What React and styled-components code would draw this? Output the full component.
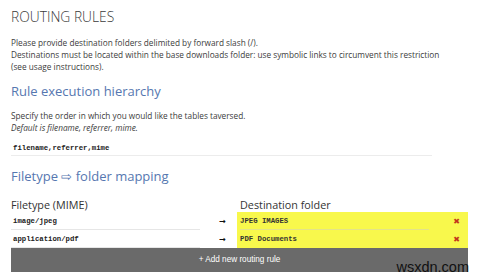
import React from 'react';
import styled, { createGlobalStyle } from 'styled-components';

const Global = createGlobalStyle`
  body {
    margin: 0;
    background: #fff;
    font-family: "Open Sans", "Liberation Sans", sans-serif;
    color: #333;
  }
`;

const Page = styled.div`
  position: relative;
  width: 480px;
  height: 276px;
  overflow: hidden;
  padding: 7px 12px 0 11px;
  box-sizing: border-box;
`;

const Title = styled.h1`
  margin: 0;
  font-size: 13.8px;
  font-weight: 300;
  line-height: 20px;
  color: #3a3a3a;
`;

const Text = styled.p`
  margin: ${p => p.$top || 0}px 0 0;
  font-size: 8.25px;
  line-height: 12px;
  color: #3c3c3c;
  white-space: nowrap;
`;

const Heading = styled.h2`
  margin: ${p => p.$top}px 0 0;
  font-size: 13px;
  font-weight: 400;
  line-height: 18px;
  color: #5677b0;
`;

const Order = styled.div`
  margin-top: 7px;
  width: 419px;
  height: 14px;
  border-bottom: 1px solid #ececec;
  padding-left: 2px;
  font-family: "Liberation Mono", monospace;
  font-size: 7.3px;
  font-weight: 700;
  line-height: 14px;
  color: #222;
`;

const Grid = styled.div`
  margin-top: 12px;
  display: grid;
  grid-template-columns: 189px 37px 1fr;
`;

const ColHead = styled.div`
  grid-column: ${p => p.$col};
  font-size: 10.8px;
  line-height: 14px;
  color: #333;
  padding-left: ${p => (p.$col === 3 ? 3 : 0)}px;
  margin: 1px 0 0;
`;

const Mime = styled.div`
  height: 17px;
  border-bottom: 1px solid #e6e6e6;
  padding-left: 2px;
  font-family: "Liberation Mono", monospace;
  font-size: 7.3px;
  font-weight: 700;
  line-height: 18px;
  color: #222;
`;

const Arrow = styled.div`
  display: flex;
  align-items: center;
  justify-content: center;
  padding-left: 8px;
  font-family: "DejaVu Sans", sans-serif;
  font-size: 8px;
  font-weight: 700;
  color: #111;
`;

const Dest = styled.div`
  display: flex;
  align-items: center;
  height: 18px;
  background: #f8f84c;
  padding: 0 8px 0 3px;
`;

const DestInput = styled.div`
  flex: 1;
  height: 17px;
  margin-right: 24px;
  border-bottom: 1px solid ${p => (p.$last ? 'transparent' : '#e3e38a')};
  font-family: "Liberation Mono", monospace;
  font-size: 7.3px;
  font-weight: 700;
  line-height: 18px;
  color: #333;
`;

const Remove = styled.span`
  font-family: "DejaVu Sans", sans-serif;
  font-size: 8px;
  font-weight: 700;
  color: #c2361b;
`;

const AddButton = styled.div`
  grid-column: 1 / 4;
  height: 24px;
  background: #6a6a6a;
  color: #fff;
  font-family: "Liberation Sans", Arial, sans-serif;
  font-size: 8.2px;
  line-height: 24px;
  text-align: center;
`;

const Watermark = styled.div`
  position: absolute;
  right: 11px;
  bottom: 1px;
  font-family: "Liberation Sans", Arial, sans-serif;
  font-size: 14.5px;
  color: #111;
`;

const rules = [
  { mime: 'image/jpeg', dest: 'JPEG IMAGES' },
  { mime: 'application/pdf', dest: 'PDF Documents' },
];

export default function App() {
  return (
    <Page>
      <Global />
      <Title>ROUTING RULES</Title>
      <Text $top={10}>
        Please provide destination folders delimited by forward slash (/).
        <br />
        Destinations must be located within the base downloads folder: use symbolic links to circumvent this restriction
        <br />
        (see usage instructions).
      </Text>

      <Heading $top={9}>Rule execution hierarchy</Heading>
      <Text $top={10}>
        Specify the order in which you would like the tables taversed.
        <br />
        <i>Default is filename, referrer, mime.</i>
      </Text>
      <Order>filename,referrer,mime</Order>

      <Heading $top={11}>Filetype ⇨ folder mapping</Heading>
      <Grid>
        <ColHead $col={1}>Filetype (MIME)</ColHead>
        <ColHead $col={3}>Destination folder</ColHead>
        {rules.map((r, i) => (
          <React.Fragment key={r.mime}>
            <Mime>{r.mime}</Mime>
            <Arrow>→</Arrow>
            <Dest>
              <DestInput $last={i === rules.length - 1}>{r.dest}</DestInput>
              <Remove>✖</Remove>
            </Dest>
          </React.Fragment>
        ))}
        <AddButton>+ Add new routing rule</AddButton>
      </Grid>
      <Watermark>wsxdn.com</Watermark>
    </Page>
  );
}
